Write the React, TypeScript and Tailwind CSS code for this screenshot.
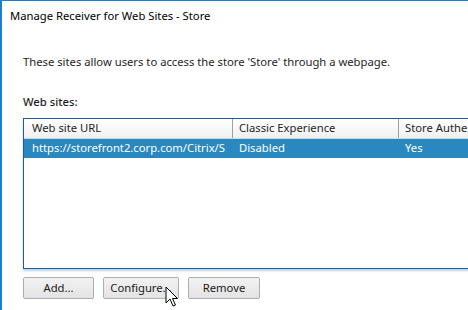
import React from "react";

const font = { fontFamily: '"Noto Sans", "Open Sans", sans-serif' };

function Btn({ label, w }: { label: string; w: string }) {
  return (
    <div
      className={`${w} h-[22px] flex items-center justify-center border border-[#adadad] rounded-[2px] bg-gradient-to-b from-[#f2f2f2] to-[#e3e3e3] text-[11.25px] text-[#1a1a1a]`}
    >
      {label}
    </div>
  );
}

export default function App() {
  return (
    <div className="w-[468px] h-[310px] bg-white overflow-hidden relative" style={font}>
      <div className="absolute inset-0 border-l-2 border-t border-[#1a7fd0] pointer-events-none" />
      <div className="pl-[10px] pt-[6px] text-[11.25px] text-[#000] leading-[20px]">
        Manage Receiver for Web Sites - Store
      </div>
      <div className="pl-[23px] pt-[26px] text-[11.25px] text-[#1e1e1e] leading-[20px]">
        These sites allow users to access the store 'Store' through a webpage.
      </div>
      <div className="pl-[23px] pt-[20px] text-[11.25px] font-medium text-[#1e1e1e] leading-[20px]">
        Web sites:
      </div>
      <div className="ml-[23px] mt-[6px] w-[460px] h-[151px] border border-[#1f5c99] shadow-[0_2px_2px_rgba(120,170,210,0.5)] text-[11.25px]">
        <div className="flex h-[20px] border-b border-[#d5d5d5] bg-gradient-to-b from-[#ffffff] to-[#f0f0f0] text-[#1e1e1e]">
          <div className="w-[209px] pl-[8px] flex items-center border-r border-[#a0a0a0]">Web site URL</div>
          <div className="w-[166px] pl-[6px] flex items-center border-r border-[#a0a0a0]">Classic Experience</div>
          <div className="flex-1 pl-[6px] flex items-center whitespace-nowrap overflow-hidden">Store Authe</div>
        </div>
        <div className="flex h-[19px] bg-[#2a88c0] text-white">
          <div className="w-[209px] pl-[8px] flex items-center whitespace-nowrap overflow-hidden">https://storefront2.corp.com/Citrix/S</div>
          <div className="w-[166px] pl-[6px] flex items-center">Disabled</div>
          <div className="flex-1 pl-[6px] flex items-center">Yes</div>
        </div>
      </div>
      <div className="flex gap-[9px] pl-[23px] pt-[8px]">
        <Btn label="Add..." w="w-[71px]" />
        <Btn label="Configure..." w="w-[76px]" />
        <Btn label="Remove" w="w-[72px]" />
      </div>
      <svg className="absolute left-[165px] top-[286px]" width="14" height="22" viewBox="0 0 14 22">
        <path d="M1 1 L1 17 L5 13 L8 20 L10.5 19 L7.5 12.5 L12.5 12.5 Z" fill="white" stroke="black" strokeWidth="1" strokeLinejoin="miter" />
      </svg>
    </div>
  );
}
